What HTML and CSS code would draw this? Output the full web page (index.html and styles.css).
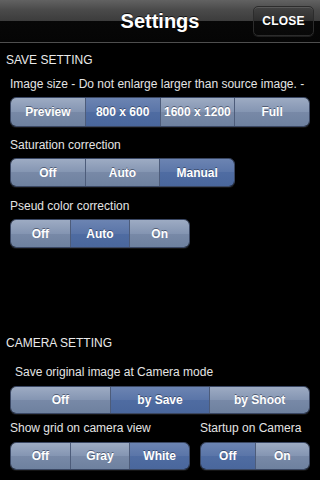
FILE: index.html
```html
<!DOCTYPE html>
<html>
<head>
<meta charset="utf-8">
<link rel="stylesheet" href="styles.css">
</head>
<body>
<div class="screen">
  <header class="navbar">
    <div class="nav-side"></div>
    <h1 class="title">Settings</h1>
    <div class="nav-side nav-right"><button class="close-btn">CLOSE</button></div>
  </header>

  <section class="group group-save">
    <h2 class="group-title">SAVE SETTING</h2>
    <div class="field f-size">
      <div class="label">Image size - Do not enlarge larger than source image. -</div>
      <div class="seg seg-full h30">
        <div class="seg-item">Preview</div>
        <div class="seg-item on">800 x 600</div>
        <div class="seg-item">1600 x 1200</div>
        <div class="seg-item">Full</div>
      </div>
    </div>
    <div class="field f-sat">
      <div class="label">Saturation correction</div>
      <div class="seg seg-225 h29">
        <div class="seg-item">Off</div>
        <div class="seg-item">Auto</div>
        <div class="seg-item on">Manual</div>
      </div>
    </div>
    <div class="field f-pseud">
      <div class="label">Pseud color correction</div>
      <div class="seg seg-180 h29">
        <div class="seg-item">Off</div>
        <div class="seg-item on">Auto</div>
        <div class="seg-item">On</div>
      </div>
    </div>
  </section>

  <section class="group group-camera">
    <h2 class="group-title">CAMERA SETTING</h2>
    <div class="field f-orig">
      <div class="label label-indent">Save original image at Camera mode</div>
      <div class="seg seg-full h28">
        <div class="seg-item">Off</div>
        <div class="seg-item on">by Save</div>
        <div class="seg-item">by Shoot</div>
      </div>
    </div>
    <div class="row">
      <div class="field f-grid">
        <div class="label">Show grid on camera view</div>
        <div class="seg seg-180 h28">
          <div class="seg-item">Off</div>
          <div class="seg-item">Gray</div>
          <div class="seg-item on">White</div>
        </div>
      </div>
      <div class="field f-startup">
        <div class="label">Startup on Camera</div>
        <div class="seg seg-110 h28">
          <div class="seg-item on">Off</div>
          <div class="seg-item">On</div>
        </div>
      </div>
    </div>
  </section>
</div>
</body>
</html>
```

FILE: styles.css
```css
html, body {
  margin: 0;
  padding: 0;
  background: #000;
}
body {
  font-family: "Liberation Sans", Arial, Helvetica, sans-serif;
  color: #e6e6e6;
}
.screen {
  width: 320px;
  height: 480px;
  overflow: hidden;
  background: #000;
}
.navbar {
  height: 42px;
  display: grid;
  grid-template-columns: 1fr auto 1fr;
  align-items: center;
  background: linear-gradient(#626262 0px, #4a4a4a 10px, #3c3c3c 21px, #070707 21px, #050505 42px);
  border-bottom: 1px solid #4e4e4e;
}
.title {
  margin: 0;
  font-size: 20px;
  font-weight: bold;
  color: #fff;
  line-height: 24px;
  text-shadow: 0 -1px 0 rgba(0,0,0,0.7);
}
.nav-right {
  display: flex;
  justify-content: flex-end;
  padding-right: 6px;
}
.close-btn {
  width: 61px;
  height: 30px;
  margin: 0;
  padding: 0;
  border: 1px solid #2c2c2c;
  border-radius: 5px;
  background: linear-gradient(#434343 0px, #2e2e2e 14px, #0b0b0b 14px, #080808 30px);
  box-shadow: inset 0 1px 0 rgba(255,255,255,0.12), 0 1px 0 rgba(255,255,255,0.1);
  color: #fff;
  font-family: "Liberation Sans", Arial, sans-serif;
  font-size: 12px;
  font-weight: bold;
  letter-spacing: 0.2px;
}
.group-title {
  margin: 0;
  padding-left: 6px;
  font-size: 12px;
  font-weight: normal;
  line-height: 16px;
  color: #eaeaea;
}
.group-save {
  padding-top: 9px;
}
.group-camera {
  padding-top: 87px;
}
.label {
  font-size: 12px;
  line-height: 16px;
  color: #e4e4e4;
  white-space: nowrap;
  padding-left: 10px;
}
.label-indent {
  padding-left: 15px;
}
.f-size { margin-top: 8px; }
.f-sat { margin-top: 10px; }
.f-pseud { margin-top: 11px; }
.f-orig { margin-top: 13px; }
.row {
  display: flex;
  margin-top: 6px;
}
.f-grid { width: 190px; }
.f-startup { width: 130px; }
.f-startup .label { padding-left: 10px; }

.seg {
  display: flex;
  margin-left: 10px;
  margin-top: 5px;
  border: 1px solid #3a4763;
  border-radius: 6px;
  overflow: hidden;
  box-sizing: border-box;
  box-shadow: 0 1px 0 rgba(255,255,255,0.08);
}
.f-orig .seg, .row .seg { margin-top: 6px; }
.seg-full { width: 300px; }
.seg-225 { width: 225px; }
.seg-180 { width: 180px; }
.seg-110 { width: 110px; }
.h30 { height: 30px; }
.h29 { height: 29px; }
.h28 { height: 28px; }
.seg-item {
  flex: 1 1 0;
  display: flex;
  align-items: center;
  justify-content: center;
  font-size: 12px;
  font-weight: bold;
  color: #fff;
  text-shadow: 0 -1px 0 rgba(30,40,60,0.55);
  background: linear-gradient(#9dabc3 0%, #8495b2 50%, #7889a7 50%, #6e819f 100%);
  border-left: 1px solid #4d5c7a;
  white-space: nowrap;
}
.seg-item:first-child {
  border-left: none;
}
.seg-item.on {
  background: linear-gradient(#6c84b2 0%, #5a75a8 50%, #4f6ca2 50%, #4a679c 100%);
}
.f-startup .seg { margin-left: 10px; }
```
